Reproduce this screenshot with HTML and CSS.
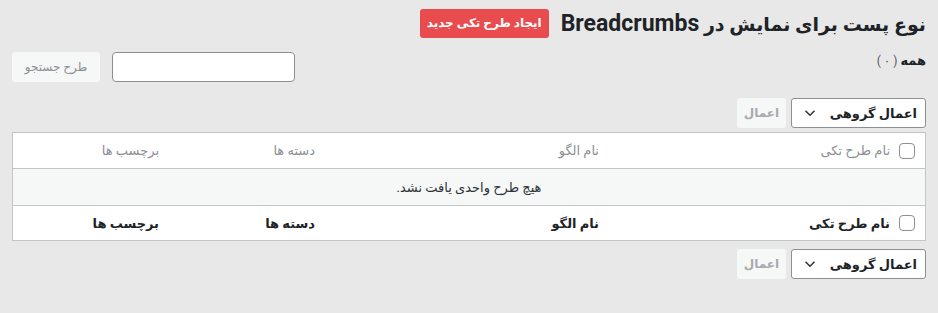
FILE: index.html
```html
<!DOCTYPE html>
<html lang="fa" dir="rtl">
<head>
<meta charset="utf-8">
<title>Breadcrumbs</title>
<link rel="stylesheet" href="styles.css">
</head>
<body>
<div class="wrap">
  <div class="heading">
    <h1 class="title">نوع پست برای نمایش در <span class="latin">Breadcrumbs</span></h1>
    <a class="btn-new">ایجاد طرح تکی جدید</a>
  </div>
  <div class="subbar">
    <div class="views"><b>همه</b> <span class="count">( ۰ )</span></div>
    <div class="search">
      <div class="search-input"></div>
      <div class="btn-light">طرح جستجو</div>
    </div>
  </div>
  <div class="tablenav">
    <div class="select"><span>اعمال گروهی</span>
      <svg class="chev" width="12" height="8" viewBox="0 0 12 8"><path d="M1.5 1.8 6 6.2 10.5 1.8" fill="none" stroke="#2c3338" stroke-width="1.5"/></svg>
    </div>
    <div class="btn-apply">اعمال</div>
  </div>
  <div class="table">
    <div class="row head">
      <div class="c-title"><span class="cb"></span><span>نام طرح تکی</span></div>
      <div class="c-tpl">نام الگو</div>
      <div class="c-cat">دسته ها</div>
      <div class="c-tag">برچسب ها</div>
    </div>
    <div class="row empty">هیچ طرح واحدی یافت نشد.</div>
    <div class="row foot">
      <div class="c-title"><span class="cb"></span><span>نام طرح تکی</span></div>
      <div class="c-tpl">نام الگو</div>
      <div class="c-cat">دسته ها</div>
      <div class="c-tag">برچسب ها</div>
    </div>
  </div>
  <div class="tablenav bottom">
    <div class="select"><span>اعمال گروهی</span>
      <svg class="chev" width="12" height="8" viewBox="0 0 12 8"><path d="M1.5 1.8 6 6.2 10.5 1.8" fill="none" stroke="#2c3338" stroke-width="1.5"/></svg>
    </div>
    <div class="btn-apply">اعمال</div>
  </div>
</div>
</body>
</html>
```
FILE: styles.css
```css
html, body {
  margin: 0;
  padding: 0;
  background: #e8e8e8;
}
body {
  font-family: "Roboto", "DejaVu Sans", sans-serif;
  font-size: 13px;
  color: #1d2327;
  direction: rtl;
}
.wrap {
  padding: 9px 12px 0 12px;
}
.heading {
  display: flex;
  align-items: center;
  height: 29px;
}
.title {
  margin: 0;
  font-size: 19px;
  font-weight: 700;
  color: #1d2327;
  line-height: 29px;
}
.latin {
  font-size: 23px;
}
.btn-new {
  margin-right: 12px;
  background: #e84c4e;
  color: #fff;
  font-size: 12px;
  font-weight: 700;
  height: 29px;
  line-height: 29px;
  padding: 0 7px;
  border-radius: 3px;
}
.subbar {
  display: flex;
  justify-content: space-between;
  align-items: flex-start;
  margin-top: 14px;
}
.views {
  font-size: 12px;
  margin-top: 1px;
}
.views b {
  font-weight: 700;
  font-size: 13px;
}
.count {
  color: #50575e;
}
.search {
  display: flex;
  gap: 12px;
}
.search-input {
  width: 181px;
  height: 28px;
  background: #fff;
  border: 1px solid #8c8f94;
  border-radius: 4px;
}
.btn-light {
  width: 88px;
  height: 30px;
  line-height: 30px;
  text-align: center;
  background: #f6f7f7;
  color: #8c8f94;
  border-radius: 3px;
  font-size: 12px;
}
.tablenav {
  display: flex;
  gap: 5px;
  margin-top: 16px;
  height: 30px;
}
.tablenav.bottom {
  margin-top: 8px;
}
.select {
  height: 28px;
  background: #fff;
  border: 1px solid #8c8f94;
  border-radius: 3px;
  display: flex;
  align-items: center;
  justify-content: space-between;
  padding: 0 8px 0 12px;
  box-sizing: content-box;
  width: 113px;
  font-weight: 700;
  font-size: 13px;
}
.btn-apply {
  width: 49px;
  height: 30px;
  line-height: 30px;
  text-align: center;
  background: #f6f7f7;
  color: #a7aaad;
  border-radius: 3px;
  font-size: 12px;
  font-weight: 700;
}
.table {
  margin-top: 4px;
  background: #fff;
  border: 1px solid #c3c4c7;
}
.row {
  display: flex;
  align-items: center;
  height: 35px;
}
.row.empty {
  justify-content: center;
  background: #f6f7f7;
  border-top: 1px solid #c3c4c7;
  border-bottom: 1px solid #c3c4c7;
  height: 36px;
  color: #2c3338;
}
.row.foot {
  height: 34px;
}
.row > div {
  box-sizing: border-box;
  padding-right: 10px;
}
.c-title {
  width: 316px;
  display: flex;
  align-items: center;
  gap: 9px;
}
.c-title .cb {
  width: 16px;
  height: 16px;
  border: 1px solid #8c8f94;
  border-radius: 4px;
  background: #fff;
  box-sizing: border-box;
}
.c-tpl { width: 284px; }
.c-cat { width: 156px; }
.c-tag { flex: 1; }
.head {
  color: #8c8f94;
  font-size: 13px;
}
.foot {
  font-weight: 700;
  font-size: 13px;
}
```
